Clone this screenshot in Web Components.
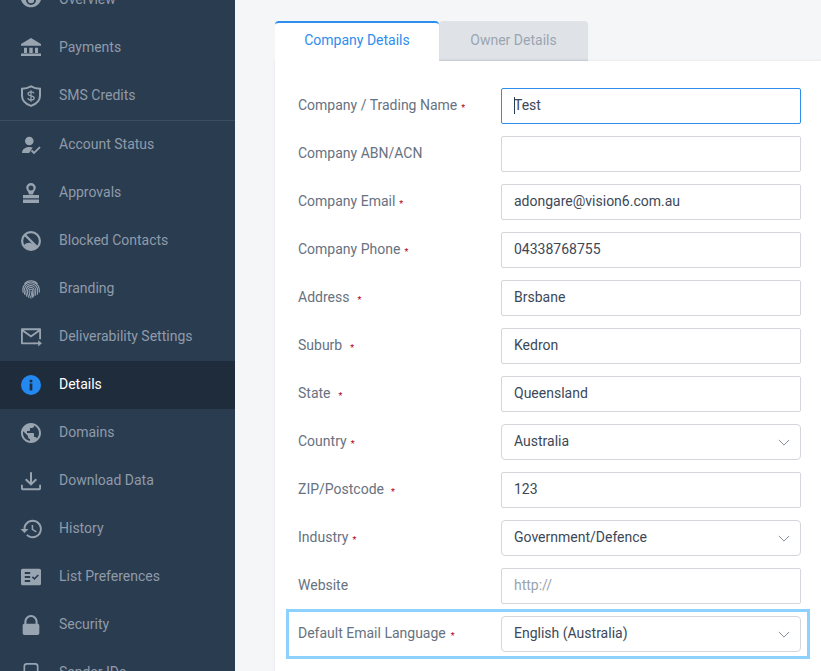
<!DOCTYPE html>
<html lang="en"><head><meta charset="utf-8"><title>Details</title>
<style>
html,body{margin:0;height:100%;overflow:hidden}
body{display:flex;font-family:Roboto,"Liberation Sans",sans-serif;background:#f5f6f8}
</style></head>
<body>
<settings-sidebar>
  <nav-item icon="overview">Overview</nav-item>
  <nav-item icon="payments">Payments</nav-item>
  <nav-item icon="sms" divider>SMS Credits</nav-item>
  <nav-item icon="status">Account Status</nav-item>
  <nav-item icon="approvals">Approvals</nav-item>
  <nav-item icon="blocked">Blocked Contacts</nav-item>
  <nav-item icon="branding">Branding</nav-item>
  <nav-item icon="deliver">Deliverability Settings</nav-item>
  <nav-item icon="details" active>Details</nav-item>
  <nav-item icon="domains">Domains</nav-item>
  <nav-item icon="download">Download Data</nav-item>
  <nav-item icon="history">History</nav-item>
  <nav-item icon="list">List Preferences</nav-item>
  <nav-item icon="security">Security</nav-item>
  <nav-item icon="sender">Sender IDs</nav-item>
</settings-sidebar>
<details-panel>
  <tab-strip slot="tabs"></tab-strip>
  <form-row label="Company / Trading Name" req="4" caret>Test</form-row>
  <form-row label="Company ABN/ACN"></form-row>
  <form-row label="Company Email" req="4">adongare@vision6.com.au</form-row>
  <form-row label="Company Phone" req="4">04338768755</form-row>
  <form-row label="Address" req="8">Brsbane</form-row>
  <form-row label="Suburb" req="8">Kedron</form-row>
  <form-row label="State" req="8">Queensland</form-row>
  <form-row label="Country" req="4" select>Australia</form-row>
  <form-row label="ZIP/Postcode" req="7">123</form-row>
  <form-row label="Industry" req="4" select>Government/Defence</form-row>
  <form-row label="Website" placeholder>http://</form-row>
  <form-row label="Default Email Language" req="5" select highlight>English (Australia)</form-row>
</details-panel>
<script>
const V20='2 2 20 20',V22='1 1 22 22',V24='0 0 24 24';
const ICONS={
overview:[V22,'<path fill-rule="evenodd" d="M12 4C7 4 2.700 7.100 1 12c1.700 4.900 6 8 11 8s9.300-3.100 11-8c-1.700-4.900-6-8-11-8zm0 13.500a5.500 5.500 0 1 1 0-11 5.500 5.500 0 0 1 0 11z"/><circle cx="12" cy="12" r="3.500"/>'],
payments:[V20,'<path d="M12 2 2 8v1.700h20V8zM5 11.700h3V17H5zM10.300 11.700h3.400V17h-3.400zM16 11.700h3V17h-3zM2 17.500h20V20H2z"/>'],
sms:[V20,'<path fill="none" stroke="currentColor" stroke-width="2" d="M12 2.300c2.700 1.500 5.700 2.300 9 2.400v7c0 4.600-3.600 8.300-9 10.200-5.400-1.900-9-5.600-9-10.200v-7c3.300-.1 6.300-.9 9-2.400z"/><path fill="none" stroke="currentColor" stroke-width="1.200" d="M15 9.300c-.3-1-1.400-1.500-3-1.500-1.700 0-3 .7-3 2 0 2.900 6.200 1.400 6.200 4.300 0 1.300-1.400 2-3.200 2-1.700 0-3-.7-3.200-1.900M12 6.200v11.500"/>'],
status:[V20,'<circle cx="10.300" cy="8" r="4.300"/><path d="M3 20c0-3.500 3-6 7.500-6 1.200 0 2.300.2 3.200.5L10.200 20z"/><path fill="none" stroke="currentColor" stroke-width="1.800" d="M12.500 17.500l2.500 2.500 6-5.800"/>'],
approvals:[V20,'<path fill-rule="evenodd" d="M12 2a4.800 4.800 0 0 1 4.800 4.800c0 2-2.300 3.700-2.800 6.700h-4c-.5-3-2.800-4.700-2.800-6.700A4.800 4.800 0 0 1 12 2zm0 2.400a2.500 2.500 0 1 0 0 5 2.500 2.500 0 0 0 0-5z"/><path d="M4 14h16v3.200H4zM4 18.600h16V22H4z"/>'],
blocked:[V20,'<circle cx="12" cy="12" r="8.900" fill="none" stroke="currentColor" stroke-width="2.200"/><path fill="none" stroke="currentColor" stroke-width="2.400" d="M5.500 5.500 18 18"/><path d="M5 16c3-2.800 6.500-3 9.500-.5l3.500 3.500c-4 3.300-9.500 2.800-13-3z"/>'],
branding:[V22,'<g fill="none" stroke="currentColor" stroke-width="1.150"><path d="M4.800 6.400C8.500 1.800 15.500 1.800 19.200 6.400"/><path d="M3 11.500C4 7 8 4.300 12 4.300s8 2.700 9 7.200c.3 1.700.3 3.500 0 4.500"/><path d="M3.300 16c-.5-2-.5-3.500 0-5M5.300 18.500c-1-3-1.200-6 .3-8.500 1.400-2.400 4-3.700 6.400-3.700 4 0 7.300 3.200 7.300 7.200 0 1.800-.1 3.500-.6 5"/><path d="M7.600 20.500c-1.300-2.800-1.800-5.400-1-7.800C7.300 10 9.500 8.300 12 8.300c3 0 5.300 2.300 5.300 5.200 0 2-.3 4-.9 6"/><path d="M10 21.800c-1.500-2.500-2.300-5-2-7.500.3-2.300 2-4 4-4 2.200 0 3.500 1.700 3.500 3.700 0 2.300-.4 4.600-1.200 7"/><path d="M12.300 22.500c-1.500-2.500-2.500-5.300-2.400-8.300 0-1.100.9-2 2.100-2 1.200 0 2 .9 2 2 0 2.200-.3 4.500-1 6.600"/><path d="M12 14c0 3 1 5.500 2 7.500"/></g>'],
deliver:[V22,'<path fill-rule="evenodd" d="M2 2.500h20a1 1 0 0 1 1 1v11h-2V6.300l-9 6.200-9-6.200V18h13v2H2a1 1 0 0 1-1-1V3.500a1 1 0 0 1 1-1zM4.200 4.500 12 10l7.800-5.500z"/><path d="M15 18h5v-2.500l4 3.500-4 3.500V20h-5z"/>'],
details:[V24,'<circle cx="12" cy="12" r="12" fill="#2389f0"/><rect x="10.400" y="10.200" width="3.200" height="8.300" fill="#1f2c3b"/><rect x="10.400" y="5.800" width="3.200" height="3" fill="#1f2c3b"/>'],
domains:[V24,'<path d="M12 0C5.400 0 0 5.400 0 12s5.400 12 12 12 12-5.400 12-12S18.600 0 12 0zm-1.200 21.500C6.100 20.900 2.400 16.900 2.400 12c0-.7.100-1.500.3-2.100l5.700 5.700v1.200c0 1.300 1.100 2.400 2.400 2.400zm8.300-3c-.3-1-1.200-1.700-2.300-1.700h-1.200v-3.600c0-.7-.5-1.200-1.200-1.200H7.200V9.600h2.400c.7 0 1.200-.5 1.200-1.200V6h2.400c1.300 0 2.400-1.100 2.400-2.400v-.5c3.500 1.400 6 4.900 6 8.900 0 2.500-1 4.800-2.500 6.500z"/>'],
download:[V24,'<path d="M10.800 1.500h2.400v11.800l4.300-4.300 1.700 1.700L12 17.800l-7.200-7.100L6.500 9l4.300 4.300z"/><path d="M0 16.500h2.200v3.800c0 .3.200.5.500.5h18.600c.3 0 .5-.2.500-.5v-3.800H24V21c0 1-.9 2-2 2H2c-1.100 0-2-1-2-2z"/>'],
history:[V24,'<path d="M14 1C7.900 1 3 5.900 3 12H-.6l4.700 4.700.1.200L9 12H5.300c0-4.800 3.900-8.700 8.700-8.700s8.700 3.900 8.700 8.700-3.900 8.700-8.700 8.700c-2.400 0-4.600-1-6.100-2.500l-1.700 1.700C8.200 21.800 11 23 14 23c6.100 0 11-4.900 11-11S20.100 1 14 1zm-1.200 6.200V13l5.200 3.100.9-1.500-4.300-2.500V7.200z"/>'],
list:[V24,'<path fill-rule="evenodd" d="M2 2h20a2 2 0 0 1 2 2v16a2 2 0 0 1-2 2H2a2 2 0 0 1-2-2V4a2 2 0 0 1 2-2zm2.500 4v2.300H11V6zm0 4.800v2.400H11v-2.400zm0 4.900V18H11v-2.300zm8.500-3.100 3.100 3.100 5.400-5.400-1.400-1.400-4 4-1.700-1.700z"/>'],
security:[V24,'<path fill-rule="evenodd" d="M12 0a8 8 0 0 0-8 8v2.500H4A2 2 0 0 0 2 12.500V22a2 2 0 0 0 2 2h16a2 2 0 0 0 2-2v-9.500a2 2 0 0 0-2-2V8a8 8 0 0 0-8-8zm5.500 10.500h-11V8a5.500 5.500 0 0 1 11 0z"/>'],
sender:[V24,'<rect x="4" y="1" width="16" height="22" rx="3" fill="none" stroke="currentColor" stroke-width="2"/>']
};
function def(name,cls){customElements.define(name,cls)}
def('settings-sidebar',class extends HTMLElement{constructor(){super();this.attachShadow({mode:'open'}).innerHTML=`<style>
:host{display:block;flex:0 0 235px;width:235px;height:100%;overflow:hidden;background:#2a3c50}
.list{margin-top:-24px}
</style><div class="list"><slot></slot></div>`}});
def('nav-item',class extends HTMLElement{constructor(){super();const s=this.attachShadow({mode:'open'});const [vb,body]=ICONS[this.getAttribute('icon')];s.innerHTML=`<style>
:host{display:block;box-sizing:border-box;height:48px;color:#8f9baa;font-size:14px}
:host([active]){background:#1f2c3b;color:#fff}
:host([divider]){height:49px;border-bottom:1px solid #3a4c60}
.row{display:flex;align-items:center;height:48px;padding-left:21px;gap:18px}
svg{flex:none;width:20px;height:20px;fill:#99a4b1;color:#99a4b1;overflow:visible}
span{line-height:48px;position:relative;top:-1px}
</style><div class="row"><svg viewBox="${vb}" aria-hidden="true">${body}</svg><span><slot></slot></span></div>`}});
def('details-panel',class extends HTMLElement{constructor(){super();this.attachShadow({mode:'open'}).innerHTML=`<style>
:host{display:block;flex:1;min-width:0;box-sizing:border-box;padding:21px 0 0 40px}
.card{background:#fff;padding:27px 20px 12px 23px;box-shadow:0 0 3px rgba(40,60,80,.1)}
</style><slot name="tabs"></slot><div class="card"><slot></slot></div>`}});
def('tab-strip',class extends HTMLElement{constructor(){super();this.attachShadow({mode:'open'}).innerHTML=`<style>
:host{display:flex;height:40px;font-size:14px;position:relative;z-index:1}
div{box-sizing:border-box;display:flex;align-items:center;justify-content:center;height:40px;border-radius:4px 4px 0 0}
.a{width:164px;background:#fff;color:#2e8eee;border-top:2px solid #2e8eee;padding-bottom:4px}
.b{width:149px;background:#dfe3e7;color:#9aa5b2;padding-bottom:2px;box-shadow:inset 0 -2px 2px -1px rgba(60,80,100,.18)}
</style><div class="a">Company Details</div><div class="b">Owner Details</div>`}});
def('form-row',class extends HTMLElement{constructor(){super();const s=this.attachShadow({mode:'open'});
const req=this.getAttribute('req');const lab=this.getAttribute('label');
const star=req?`<i style="margin-left:${req}px">*</i>`:'';
const chev=this.hasAttribute('select')?`<svg viewBox="0 0 14 8" aria-hidden="true"><path d="M1 1l6 6 6-6" fill="none" stroke="#7d8896" stroke-width="1.100"/></svg>`:'';
const caret=this.hasAttribute('caret')?'<b></b>':'';
s.innerHTML=`<style>
:host{display:flex;align-items:center;height:36px;margin-bottom:12px;position:relative;font-size:14px}
:host([highlight])::after{content:"";position:absolute;left:-12px;right:-9px;top:-7px;bottom:-7px;border:3px solid #8dd2fe;pointer-events:none}
label{flex:0 0 203px;color:#677280;position:relative;top:-1px}
i{font-style:normal;color:#b5001a;font-size:9px;vertical-align:-1px}
.f{flex:1;box-sizing:border-box;height:36px;display:flex;align-items:center;padding:0 12px 2px;border:1px solid #d3d6db;border-radius:2px;background:#fff;color:#3c4858;position:relative}
:host([caret]) .f{border-color:#2e8eee}
:host([select]) .f{border-radius:4px}
:host([placeholder]) .f{color:#9aa3ae}
b{position:absolute;left:12px;top:8px;width:1px;height:17px;background:#2a3c50}
svg{position:absolute;right:10px;top:14px;width:12px;height:7px}
</style><label>${lab}${star}</label><div class="f">${caret}<slot></slot>${chev}</div>`}});
</script>
</body></html>
